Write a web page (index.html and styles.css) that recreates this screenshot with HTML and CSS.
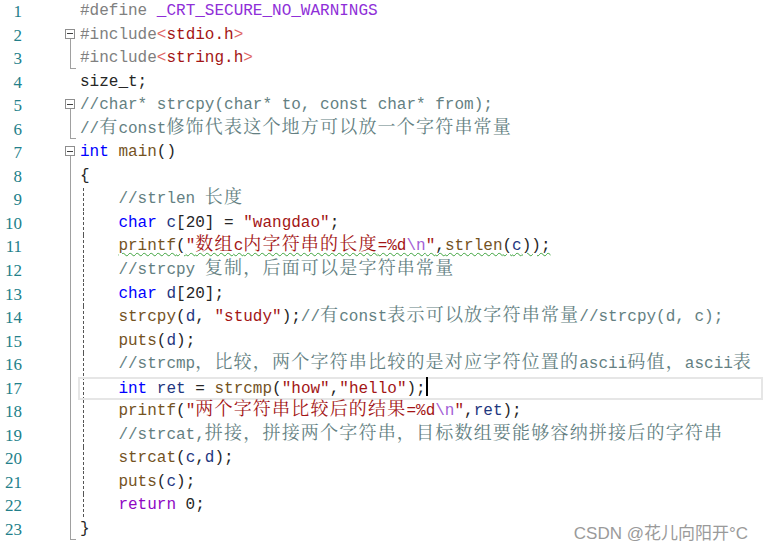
FILE: index.html
```html
<!DOCTYPE html>
<html lang="zh">
<head>
<meta charset="utf-8">
<title>code</title>
<link rel="stylesheet" href="styles.css">
</head>
<body>
<div class="editor">
<div class="ln"><span class="n">1</span><span class="f"></span><span class="c"><span class="pp">#define</span> <span class="mac">_CRT_SECURE_NO_WARNINGS</span></span></div>
<div class="ln"><span class="n">2</span><span class="f bx"><span class="box"></span></span><span class="c"><span class="pp">#include</span><span class="ab">&lt;</span><span class="s">stdio.h</span><span class="ab">&gt;</span></span></div>
<div class="ln"><span class="n">3</span><span class="f end"></span><span class="c"><span class="pp">#include</span><span class="ab">&lt;</span><span class="s">string.h</span><span class="ab">&gt;</span></span></div>
<div class="ln"><span class="n">4</span><span class="f"></span><span class="c">size_t;</span></div>
<div class="ln"><span class="n">5</span><span class="f bx"><span class="box"></span></span><span class="c"><span class="cm">//char* strcpy(char* to, const char* from);</span></span></div>
<div class="ln"><span class="n">6</span><span class="f end"></span><span class="c"><span class="cm">//<span class="z">有</span>const<span class="z">修饰代表这个地方可以放一个字符串常量</span></span></span></div>
<div class="ln"><span class="n">7</span><span class="f bx"><span class="box"></span></span><span class="c"><span class="kw">int</span> <span class="fn">main</span>()</span></div>
<div class="ln"><span class="n">8</span><span class="f v"></span><span class="c">{</span></div>
<div class="ln"><span class="n">9</span><span class="f v"></span><span class="c g">    <span class="cm">//strlen <span class="z">长度</span></span></span></div>
<div class="ln"><span class="n">10</span><span class="f v"></span><span class="c g">    <span class="kw">char</span> <span class="v">c</span>[20] = <span class="s">"wangdao"</span>;</span></div>
<div class="ln"><span class="n">11</span><span class="f v"></span><span class="c g">    <span class="sq"><span class="fn">printf</span>(<span class="s">"<span class="z">数组</span>c<span class="z">内字符串的长度</span>=%d<span class="e">\n</span>"</span>,<span class="fn">strlen</span>(<span class="v">c</span>));</span></span></div>
<div class="ln"><span class="n">12</span><span class="f v"></span><span class="c g">    <span class="cm">//strcpy <span class="z">复制，后面可以是字符串常量</span></span></span></div>
<div class="ln"><span class="n">13</span><span class="f v"></span><span class="c g">    <span class="kw">char</span> <span class="v">d</span>[20];</span></div>
<div class="ln"><span class="n">14</span><span class="f v"></span><span class="c g">    <span class="fn">strcpy</span>(<span class="v">d</span>, <span class="s">"study"</span>);<span class="cm">//<span class="z">有</span>const<span class="z">表示可以放字符串常量</span>//strcpy(d, c);</span></span></div>
<div class="ln"><span class="n">15</span><span class="f v"></span><span class="c g">    <span class="fn">puts</span>(<span class="v">d</span>);</span></div>
<div class="ln"><span class="n">16</span><span class="f v"></span><span class="c g">    <span class="cm">//strcmp<span class="z">，比较，两个字符串比较的是对应字符位置的</span>ascii<span class="z">码值，</span>ascii<span class="z">表</span></span></span></div>
<div class="ln"><span class="n">17</span><span class="f v"></span><span class="c g cur">    <span class="kw">int</span> <span class="v">ret</span> = <span class="fn">strcmp</span>(<span class="s">"how"</span>,<span class="s">"hello"</span>);<span class="caret"></span></span></div>
<div class="ln"><span class="n">18</span><span class="f v"></span><span class="c g">    <span class="fn">printf</span>(<span class="s">"<span class="z">两个字符串比较后的结果</span>=%d<span class="e">\n</span>"</span>,<span class="v">ret</span>);</span></div>
<div class="ln"><span class="n">19</span><span class="f v"></span><span class="c g">    <span class="cm">//strcat,<span class="z">拼接，拼接两个字符串，目标数组要能够容纳拼接后的字符串</span></span></span></div>
<div class="ln"><span class="n">20</span><span class="f v"></span><span class="c g">    <span class="fn">strcat</span>(<span class="v">c</span>,<span class="v">d</span>);</span></div>
<div class="ln"><span class="n">21</span><span class="f v"></span><span class="c g">    <span class="fn">puts</span>(<span class="v">c</span>);</span></div>
<div class="ln"><span class="n">22</span><span class="f v"></span><span class="c g">    <span class="rt">return</span> 0;</span></div>
<div class="ln"><span class="n">23</span><span class="f end"></span><span class="c">}</span></div>
</div>
<div class="mark">CSDN @花儿向阳开°C</div>
</body>
</html>
```
FILE: styles.css
```css
html, body {
  margin: 0;
  padding: 0;
  background: #ffffff;
}
body {
  width: 763px;
  height: 555px;
  overflow: hidden;
  position: relative;
}
.editor {
  display: flex;
  flex-direction: column;
  font-family: "Liberation Mono", "Noto Sans CJK SC", monospace;
  font-size: 16px;
  color: #262626;
}
.ln {
  display: flex;
  height: 23.55px;
  line-height: 23.55px;
}
.n {
  flex: none;
  width: 22px;
  text-align: right;
  color: #237f8a;
  font-family: "Liberation Serif", serif;
  font-size: 17px;
}
.f {
  flex: none;
  width: 56px;
  box-sizing: border-box;
}
.f.bx {
  padding: 5px 0 0 43px;
  background: linear-gradient(#a0a0a0, #a0a0a0) 48px 15px / 1px 100% no-repeat;
}
.box {
  display: block;
  width: 10px;
  height: 10px;
  box-sizing: border-box;
  border: 1px solid #8e8e8e;
  background: #fff linear-gradient(#404040, #404040) center / 6px 1px no-repeat;
}
.f.v {
  background: linear-gradient(#a0a0a0, #a0a0a0) 48px 0 / 1px 100% no-repeat;
}
.f.end {
  background:
    linear-gradient(#a0a0a0, #a0a0a0) left 48px top 0 / 1px calc(100% - 2px) no-repeat,
    linear-gradient(#a0a0a0, #a0a0a0) left 48px bottom 2px / 6px 1px no-repeat;
}
.c {
  flex: 1;
  padding-left: 2px;
  white-space: pre;
}
.c.g {
  background: repeating-linear-gradient(#555 0 3px, transparent 3px 5px) 5px 0 / 1px 100% no-repeat;
}
.c.cur {
  box-shadow: inset 0 0 0 2px #e6e6e6;
}
.z {
  font-family: "Noto Serif CJK SC", "Noto Sans CJK SC", sans-serif;
  font-size: 18px;
  letter-spacing: 1.2px;
  line-height: 14px;
}
.pp { color: #808080; }
.mac { color: #8f2fd8; }
.ab { color: #e06666; }
.s { color: #a31515; }
.cm { color: #647f82; }
.kw { color: #0000ff; }
.fn { color: #74531f; }
.v { color: #1f377f; }
.e { color: #a45fd6; }
.rt { color: #8f08c4; }
.sq {
  text-decoration: underline wavy #3ea33e;
  text-decoration-thickness: 1px;
  text-underline-offset: 2px;
}
.caret {
  display: inline-block;
  width: 2px;
  height: 19px;
  background: #000;
  vertical-align: -3px;
}
.mark {
  position: absolute;
  right: 15px;
  top: 523px;
  font-family: "Liberation Sans", "Noto Sans CJK SC", sans-serif;
  font-size: 17px;
  line-height: 22px;
  color: #9a9a9a;
  text-shadow: 0 0 2px #fff, 0 0 1px #fff;
}
```
